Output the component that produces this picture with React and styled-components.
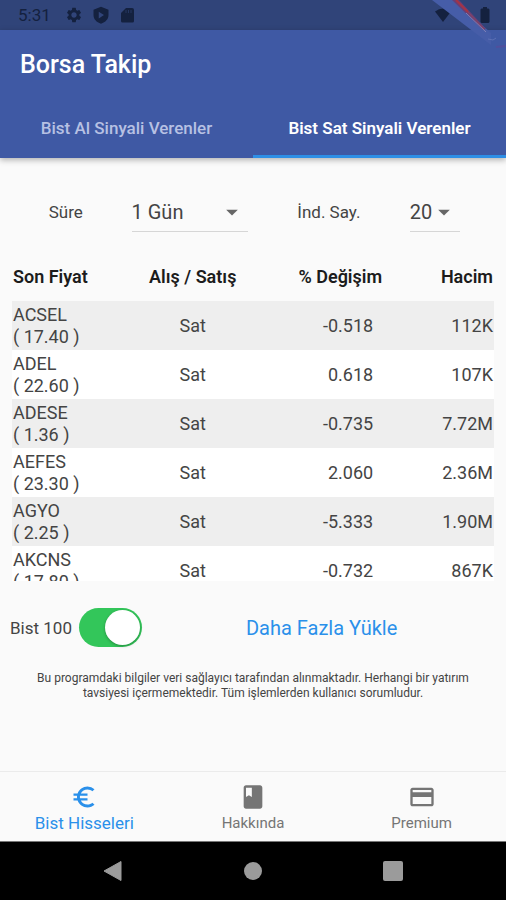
import { useState } from 'react';
import styled, { createGlobalStyle } from 'styled-components';
import {
  MdArrowDropDown,
  MdBook,
  MdCreditCard,
  MdEuroSymbol,
  MdSettings,
} from 'react-icons/md';

const stocks = [
  { name: 'ACSEL', price: '17.40', signal: 'Sat', change: '-0.518', volume: '112K' },
  { name: 'ADEL', price: '22.60', signal: 'Sat', change: '0.618', volume: '107K' },
  { name: 'ADESE', price: '1.36', signal: 'Sat', change: '-0.735', volume: '7.72M' },
  { name: 'AEFES', price: '23.30', signal: 'Sat', change: '2.060', volume: '2.36M' },
  { name: 'AGYO', price: '2.25', signal: 'Sat', change: '-5.333', volume: '1.90M' },
  { name: 'AKCNS', price: '17.80', signal: 'Sat', change: '-0.732', volume: '867K' },
];

const tabs = ['Bist Al Sinyali Verenler', 'Bist Sat Sinyali Verenler'];

const pages = [
  { label: 'Bist Hisseleri', Icon: MdEuroSymbol },
  { label: 'Hakkında', Icon: MdBook },
  { label: 'Premium', Icon: MdCreditCard },
];

export default function App() {
  const [tab, setTab] = useState(1);
  const [page, setPage] = useState(0);
  const [bist100, setBist100] = useState(true);

  return (
    <>
      <GlobalStyle />
      <Screen>
        <StatusBar>
          <Clock>5:31</Clock>
          <MdSettings size={18} />
          <ShieldIcon />
          <SdCardIcon />
          <StatusRight>
            <WifiIcon />
            <BatteryIcon />
          </StatusRight>
        </StatusBar>
        <DebugRibbon />

        <Header>
          <Title>Borsa Takip</Title>
          <Tabs>
            {tabs.map((label, i) => (
              <Tab key={label} $active={i === tab} onClick={() => setTab(i)}>
                {label}
              </Tab>
            ))}
          </Tabs>
        </Header>

        <Content>
          <Filters>
            <FilterLabel htmlFor="period">Süre</FilterLabel>
            <SelectBox>
              <Select id="period" defaultValue="1 Gün">
                <option>1 Saat</option>
                <option>1 Gün</option>
                <option>1 Hafta</option>
              </Select>
              <MdArrowDropDown size={28} />
            </SelectBox>
            <FilterLabel htmlFor="count">İnd. Say.</FilterLabel>
            <SelectBox>
              <Select id="count" defaultValue="20">
                <option>10</option>
                <option>20</option>
                <option>50</option>
              </Select>
              <MdArrowDropDown size={28} />
            </SelectBox>
          </Filters>

          <TableScroll>
            <Table>
              <thead>
                <tr>
                  <HeadCell $width="26%">Son Fiyat</HeadCell>
                  <HeadCell $width="23%" $align="center">
                    Alış / Satış
                  </HeadCell>
                  <HeadCell $width="28%" $align="right">
                    % Değişim
                  </HeadCell>
                  <HeadCell $width="23%" $align="right">
                    Hacim
                  </HeadCell>
                </tr>
              </thead>
              <tbody>
                {stocks.map((stock) => (
                  <Row key={stock.name}>
                    <Cell>
                      {stock.name}
                      <br />( {stock.price} )
                    </Cell>
                    <Cell $align="center">{stock.signal}</Cell>
                    <ChangeCell $align="right">{stock.change}</ChangeCell>
                    <Cell $align="right">{stock.volume}</Cell>
                  </Row>
                ))}
              </tbody>
            </Table>
          </TableScroll>

          <Actions>
            <SwitchLabel>
              Bist 100
              <Switch checked={bist100} onChange={(e) => setBist100(e.target.checked)} />
            </SwitchLabel>
            <MoreButton>Daha Fazla Yükle</MoreButton>
          </Actions>

          <Disclaimer>
            Bu programdaki bilgiler veri sağlayıcı tarafından alınmaktadır. Herhangi bir yatırım
            tavsiyesi içermemektedir. Tüm işlemlerden kullanıcı sorumludur.
          </Disclaimer>
        </Content>

        <BottomNav>
          {pages.map(({ label, Icon }, i) => (
            <NavButton key={label} $active={i === page} onClick={() => setPage(i)}>
              <Icon size={28} />
              {label}
            </NavButton>
          ))}
        </BottomNav>

        <SystemNav>
          <SystemButton aria-label="Geri">
            <svg width="20" height="22" viewBox="0 0 20 22">
              <path d="M18 1.500v19L1 11z" fill="#9b9b9b" stroke="#9b9b9b" strokeLinejoin="round" />
            </svg>
          </SystemButton>
          <SystemButton aria-label="Ana ekran">
            <svg width="20" height="20" viewBox="0 0 20 20">
              <circle cx="10" cy="10" r="9" fill="#9b9b9b" />
            </svg>
          </SystemButton>
          <SystemButton aria-label="Son uygulamalar">
            <svg width="20" height="20" viewBox="0 0 20 20">
              <rect width="20" height="20" rx="2" fill="#9b9b9b" />
            </svg>
          </SystemButton>
        </SystemNav>
      </Screen>
    </>
  );
}

function ShieldIcon() {
  return (
    <svg width="18" height="18" viewBox="0 0 24 24" fill="currentColor">
      <path
        fillRule="evenodd"
        d="M12 1l10 4v7c0 5.500-4 9.700-10 11.500C6 21.700 2 17.500 2 12V5zM9 7.500v9l7-4.500z"
      />
    </svg>
  );
}

function SdCardIcon() {
  return (
    <svg width="18" height="18" viewBox="0 0 18 18" fill="currentColor">
      <path d="M7 2h6q2 0 2 2v11q0 1.500-1.500 1.500h-10Q2 16.500 2 15V7z" />
      <path d="M7 4v3M9.500 4v3M12 4v3" stroke="#304479" opacity="0.6" />
    </svg>
  );
}

function WifiIcon() {
  return (
    <svg width="18" height="18" viewBox="0 0 18 18" fill="currentColor">
      <path d="M1 5.500Q5 2.500 9 2.500q4.500 0 8 3L9 16z" />
    </svg>
  );
}

function BatteryIcon() {
  return (
    <svg width="10" height="18" viewBox="0 0 10 18" fill="currentColor">
      <path d="M3 1h4v1.500h1.500l1 1V16l-1 1h-7l-1-1V3.500l1-1H3z" />
    </svg>
  );
}

function DebugRibbon() {
  return (
    <Ribbon width="76" height="60" viewBox="0 0 76 60">
      <path d="M2 0h22l37 33v12z" fill="#465da8" />
      <path d="M22 0h7l27 29-3 1z" fill="#693f75" />
      <path d="M26 0l12 12" stroke="#a53445" strokeWidth="2" fill="none" />
      <path d="M38 12l16 17" stroke="#8d4560" strokeWidth="1" fill="none" />
      <path d="M36 13l20 19" stroke="#7f80b8" fill="none" />
      <path d="M58 39l5 1 3-2" stroke="#5c70b4" fill="none" />
      <path d="M66 47l10-1" stroke="#514f9c" strokeWidth="2" fill="none" />
    </Ribbon>
  );
}

const GlobalStyle = createGlobalStyle`
  * {
    box-sizing: border-box;
  }
  body {
    margin: 0;
    background: #fafafa;
    font-family: Roboto, 'Noto Sans', sans-serif;
  }
  button, select {
    font-family: inherit;
  }
  button {
    border: none;
    padding: 0;
    background: none;
    cursor: pointer;
  }
`;

const Screen = styled.div`
  position: relative;
  display: flex;
  flex-direction: column;
  min-height: 100vh;
  overflow: hidden;
`;

const StatusBar = styled.div`
  display: flex;
  align-items: center;
  gap: 9px;
  height: 30px;
  padding: 0 16px 0 18px;
  background: #304479;
  color: #14213f;
`;

const Clock = styled.span`
  margin-right: 5px;
  font-size: 17px;
`;

const StatusRight = styled.div`
  display: flex;
  gap: 28px;
  margin-left: auto;
`;

const Ribbon = styled.svg`
  position: absolute;
  top: 0;
  right: 0;
`;

const Header = styled.header`
  background: #3f59a4;
  box-shadow: 0 2px 6px rgba(0, 0, 0, 0.3);
`;

const Title = styled.h1`
  margin: 0;
  padding: 0 20px;
  font-size: 25px;
  font-weight: 500;
  line-height: 70px;
  color: #fff;
`;

const Tabs = styled.div`
  display: grid;
  grid-template-columns: 1fr 1fr;
`;

const Tab = styled.button`
  height: 58px;
  border-bottom: 3px solid ${(props) => (props.$active ? '#2e8fe6' : 'transparent')};
  font-size: 17px;
  font-weight: ${(props) => (props.$active ? 600 : 500)};
  color: ${(props) => (props.$active ? '#fff' : '#b7c1e3')};
`;

const Content = styled.main`
  flex: 1;
  padding-top: 34px;
`;

const Filters = styled.div`
  display: grid;
  grid-template-columns: 26fr 23fr 32fr 10fr 9fr;
  align-items: center;
`;

const FilterLabel = styled.label`
  font-size: 17px;
  text-align: center;
  color: #444;
`;

const SelectBox = styled.div`
  display: grid;
  grid-template-columns: 1fr 30px;
  align-items: center;
  height: 40px;
  border-bottom: 1px solid #d6d6d6;
  color: #666;

  svg {
    grid-area: 1 / 2;
    pointer-events: none;
  }
`;

const Select = styled.select`
  grid-area: 1 / 1 / 2 / 3;
  width: 100%;
  border: none;
  padding: 0;
  appearance: none;
  background: none;
  font-size: 20px;
  color: #444;
`;

const TableScroll = styled.div`
  height: 329px;
  margin: 20px 12px 0;
  overflow: auto;
  scrollbar-width: none;
`;

const Table = styled.table`
  width: 100%;
  table-layout: fixed;
  border-collapse: collapse;
`;

const HeadCell = styled.th`
  position: sticky;
  top: 0;
  width: ${(props) => props.$width};
  height: 49px;
  padding: 0 1px;
  background: #fafafa;
  font-size: 18px;
  font-weight: 600;
  text-align: ${(props) => props.$align || 'left'};
  color: #1c1c1c;
`;

const Row = styled.tr`
  height: 49px;
  background: #fff;

  &:nth-child(odd) {
    background: #eee;
  }
`;

const Cell = styled.td`
  padding: 0 1px;
  font-size: 18px;
  line-height: 22px;
  text-align: ${(props) => props.$align || 'left'};
  color: #444;
`;

const ChangeCell = styled(Cell)`
  padding-right: 10px;
`;

const Actions = styled.div`
  display: flex;
  align-items: center;
  gap: 104px;
  margin-top: 27px;
  padding: 0 10px;
`;

const SwitchLabel = styled.label`
  display: flex;
  align-items: center;
  gap: 7px;
  font-size: 17px;
  color: #444;
`;

const Switch = styled.input.attrs({ type: 'checkbox', role: 'switch' })`
  width: 63px;
  height: 39px;
  margin: 0;
  padding: 2px;
  appearance: none;
  border-radius: 20px;
  background: #ddd;
  cursor: pointer;

  &::before {
    content: '';
    display: block;
    width: 35px;
    height: 35px;
    border-radius: 50%;
    background: #fff;
    box-shadow: 0 1px 3px rgba(0, 0, 0, 0.3);
  }

  &:checked {
    background: #33c65a;
  }

  &:checked::before {
    margin-left: auto;
  }
`;

const MoreButton = styled.button`
  font-size: 20px;
  color: #2a90ea;
`;

const Disclaimer = styled.p`
  margin: 24px;
  font-size: 12px;
  line-height: 15px;
  text-align: center;
  color: #444;
`;

const BottomNav = styled.nav`
  display: grid;
  grid-template-columns: repeat(3, 1fr);
  height: 70px;
  border-top: 1px solid #ebebeb;
`;

const NavButton = styled.button`
  display: flex;
  flex-direction: column;
  align-items: center;
  padding-top: 11px;
  font-size: ${(props) => (props.$active ? 17 : 15)}px;
  line-height: 24px;
  color: ${(props) => (props.$active ? '#2a90ea' : '#757575')};
`;

const SystemNav = styled.div`
  display: flex;
  justify-content: center;
  gap: 120px;
  height: 59px;
  border-top: 1px solid #777;
  background: #000;
`;

const SystemButton = styled.button`
  display: flex;
  align-items: center;
`;
